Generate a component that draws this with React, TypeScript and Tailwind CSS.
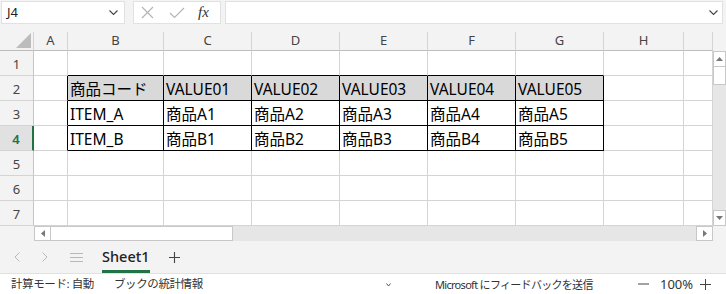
import React from "react";

const COLS = ["A", "B", "C", "D", "E", "F", "G", "H", ""];

const DATA: Record<number, string[]> = {
  2: ["", "商品コード", "VALUE01", "VALUE02", "VALUE03", "VALUE04", "VALUE05"],
  3: ["", "ITEM_A", "商品A1", "商品A2", "商品A3", "商品A4", "商品A5"],
  4: ["", "ITEM_B", "商品B1", "商品B2", "商品B3", "商品B4", "商品B5"],
};

function Chevron({ className }: { className?: string }) {
  return (
    <svg width="9" height="5" viewBox="0 0 9 5" className={className}>
      <polyline points="0.5,0.5 4.5,4.5 8.5,0.5" fill="none" stroke="#444" strokeWidth="1.1" />
    </svg>
  );
}

function FormulaBar() {
  return (
    <div className="flex h-[32px] items-start pt-[1px]">
      <div className="ml-[1px] flex h-[23px] w-[124px] items-center justify-between border border-[#e1e1e1] bg-white pl-[5px] pr-[6px] text-[13px] text-[#222]">
        <span>J4</span>
        <Chevron />
      </div>
      <div className="ml-[8px] flex h-[23px] w-[88px] items-center border border-[#e1e1e1] bg-white">
        <svg width="13" height="13" viewBox="0 0 13 13" className="ml-[7px]">
          <path d="M1 1 L12 12 M12 1 L1 12" stroke="#b4b4b4" strokeWidth="1.1" />
        </svg>
        <svg width="16" height="12" viewBox="0 0 16 12" className="ml-[15px]">
          <polyline points="1,6 5.5,10.5 15,1" fill="none" stroke="#b4b4b4" strokeWidth="1.1" />
        </svg>
        <span className="ml-[13px] font-['Liberation_Serif'] text-[15px] italic leading-none text-[#333]">fx</span>
      </div>
      <div className="ml-[4px] mr-[3px] flex h-[23px] flex-1 items-center justify-end border border-[#e1e1e1] bg-white pr-[4px]">
        <Chevron />
      </div>
    </div>
  );
}

function Grid() {
  return (
    <div className="grid w-[713px] grid-cols-[34px_34px_96px_88px_88px_88px_88px_88px_80px_29px] grid-rows-[19px_repeat(7,25px)]">
      <div className="flex items-end justify-end border-r border-b border-r-[#d4d4d4] border-b-[#bdbdbd] pb-[2px] pr-[2px]">
        <svg width="15" height="15" viewBox="0 0 15 15">
          <polygon points="15,0 15,15 0,15" fill="#bcbcbc" />
        </svg>
      </div>
      {COLS.map((c, i) => (
        <div
          key={c + i}
          className="flex items-center justify-center border-r border-b border-r-[#d4d4d4] border-b-[#bdbdbd] text-[13px] text-[#444]"
        >
          {c}
        </div>
      ))}
      {[1, 2, 3, 4, 5, 6, 7].map((r) => (
        <React.Fragment key={r}>
          <div
            className={
              r === 4
                ? "flex items-center justify-center border-r-2 border-b border-r-[#217346] border-b-[#d4d4d4] bg-[#e1e1e1] pt-[3px] text-[13px] font-semibold text-[#217346]"
                : "flex items-center justify-center border-r border-b border-r-[#c6c6c6] border-b-[#d4d4d4] pt-[3px] text-[13px] text-[#444]"
            }
          >
            {r}
          </div>
          {COLS.map((_, c) => {
            const rightBlack = r >= 2 && r <= 4 && c <= 6;
            const bottomBlack = r >= 1 && r <= 4 && c >= 1 && c <= 6;
            const head = r === 2 && c >= 1 && c <= 6;
            const text = DATA[r]?.[c] ?? "";
            return (
              <div
                key={c}
                className={[
                  "overflow-hidden whitespace-nowrap border-r border-b pl-[2px] text-[15.5px] leading-[26px] text-black",
                  rightBlack ? "border-r-black" : "border-r-[#d4d4d4]",
                  bottomBlack ? "border-b-black" : "border-b-[#d4d4d4]",
                  head ? "bg-[#d9d9d9]" : "bg-white",
                ].join(" ")}
              >
                {text}
              </div>
            );
          })}
        </React.Fragment>
      ))}
    </div>
  );
}

function VScroll() {
  return (
    <div className="flex w-[13px] flex-col">
      <div className="h-[19px]" />
      <div className="flex h-[16px] items-center justify-center border border-[#c8c8c8] bg-white">
        <svg width="7" height="4" viewBox="0 0 7 4">
          <polygon points="0,4 7,4 3.5,0" fill="#777" />
        </svg>
      </div>
      <div className="h-[18px] border-x border-b border-[#c8c8c8] bg-white" />
      <div className="flex-1 bg-[#e6e6e6]" />
      <div className="flex h-[16px] items-center justify-center border border-[#c8c8c8] bg-white">
        <svg width="7" height="4" viewBox="0 0 7 4">
          <polygon points="0,0 7,0 3.5,4" fill="#777" />
        </svg>
      </div>
    </div>
  );
}

function HScroll() {
  return (
    <div className="flex h-[15px]">
      <div className="w-[34px]" />
      <div className="flex w-[679px] bg-[#e6e6e6]">
        <div className="flex w-[17px] items-center justify-center border border-[#c8c8c8] bg-white">
          <svg width="4" height="7" viewBox="0 0 4 7">
            <polygon points="4,0 4,7 0,3.5" fill="#777" />
          </svg>
        </div>
        <div className="w-[182px] border-y border-r border-[#c8c8c8] bg-white" />
        <div className="flex-1" />
        <div className="flex w-[17px] items-center justify-center border border-[#c8c8c8] bg-white">
          <svg width="4" height="7" viewBox="0 0 4 7">
            <polygon points="0,0 0,7 4,3.5" fill="#777" />
          </svg>
        </div>
      </div>
    </div>
  );
}

function TabBar() {
  return (
    <div className="flex h-[32px] items-stretch">
      <div className="flex w-[34px] items-center justify-center">
        <svg width="6" height="10" viewBox="0 0 6 10">
          <polyline points="5.5,0.5 1,5 5.5,9.5" fill="none" stroke="#b8b8b8" strokeWidth="1" />
        </svg>
      </div>
      <div className="flex w-[22px] items-center justify-center">
        <svg width="6" height="10" viewBox="0 0 6 10">
          <polyline points="0.5,0.5 5,5 0.5,9.5" fill="none" stroke="#b8b8b8" strokeWidth="1" />
        </svg>
      </div>
      <div className="ml-[14px] flex w-[14px] items-center">
        <svg width="13" height="9" viewBox="0 0 13 9">
          <path d="M0 0.5 H13 M0 4.5 H13 M0 8.5 H13" stroke="#b8b8b8" strokeWidth="1" />
        </svg>
      </div>
      <div className="ml-[18px] flex flex-col">
        <div className="flex flex-1 items-center pt-[2px] text-[14.5px] font-medium text-[#222]">Sheet1</div>
        <div className="h-[3px] w-[48px] bg-[#217346]" />
      </div>
      <div className="ml-[19px] flex items-center">
        <svg width="11" height="11" viewBox="0 0 11 11">
          <path d="M5.5 0 V11 M0 5.5 H11" stroke="#444" strokeWidth="1.1" />
        </svg>
      </div>
    </div>
  );
}

function StatusBar() {
  return (
    <div className="flex h-[21px] items-center whitespace-nowrap border-t border-[#e1e1e1] bg-white text-[11.5px] leading-none text-[#333]">
      <span className="ml-[11px] w-[103px] shrink-0 tracking-[-0.4px]">計算モード: 自動</span>
      <span className="w-[272px] shrink-0 tracking-[-0.4px]">ブックの統計情報</span>
      <span className="flex w-[49px] shrink-0 items-center">
        <svg width="5" height="4" viewBox="0 0 5 4" className="mt-[2px]">
          <polyline points="0.5,0.5 2.5,3 4.5,0.5" fill="none" stroke="#555" strokeWidth="1" />
        </svg>
      </span>
      <span className="w-[203px] shrink-0 text-[11px] tracking-[-0.7px]">Microsoft にフィードバックを送信</span>
      <span className="flex w-[22px] shrink-0 items-center">
        <svg width="11" height="2" viewBox="0 0 11 2">
          <path d="M0 1 H11" stroke="#444" strokeWidth="1" />
        </svg>
      </span>
      <span className="w-[40px] shrink-0 text-[13px]">100%</span>
      <svg width="11" height="11" viewBox="0 0 11 11" className="shrink-0">
        <path d="M5.5 0 V11 M0 5.5 H11" stroke="#444" strokeWidth="1" />
      </svg>
    </div>
  );
}

export default function App() {
  return (
    <div className="flex h-[294px] w-[726px] flex-col overflow-hidden bg-[#f3f3f3] font-['Noto_Sans','Noto_Sans_CJK_JP',sans-serif]">
      <FormulaBar />
      <div className="flex">
        <Grid />
        <VScroll />
      </div>
      <HScroll />
      <TabBar />
      <StatusBar />
    </div>
  );
}
